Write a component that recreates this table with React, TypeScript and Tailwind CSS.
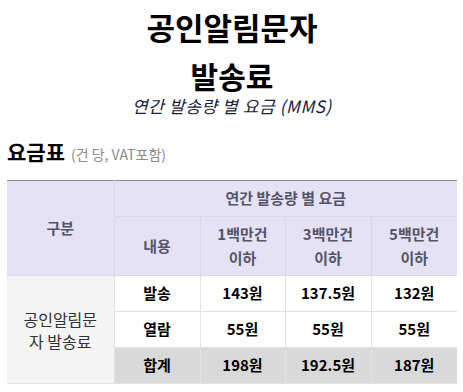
export default function App() {
  const rows = [
    { label: '발송', values: ['143원', '137.5원', '132원'], sum: false },
    { label: '열람', values: ['55원', '55원', '55원'], sum: false },
    { label: '합계', values: ['198원', '192.5원', '187원'], sum: true },
  ]

  return (
    <div
      className="bg-white pl-[7px] pr-[6px] text-black"
      style={{ fontFamily: '"Noto Sans CJK KR", "Noto Sans", sans-serif' }}
    >
      <div className="pt-[5px] text-center">
        <h1 className="text-[31px] font-bold leading-[44px]">공인알림문자</h1>
        <h2 className="mt-[6px] text-[30px] font-bold leading-[40px]">발송료</h2>
        <p className="text-[17px] italic leading-[22px] tracking-[0.6px] text-[#1b1b3a]">
          연간 발송량 별 요금 (MMS)
        </p>
      </div>

      <div className="mt-[20px] flex items-baseline gap-[6px]">
        <span className="text-[21px] font-bold leading-[28px]">요금표</span>
        <span className="text-[14px] text-[#8a8a8a]">(건 당, VAT포함)</span>
      </div>

      <table className="mt-[15px] w-[450px] table-fixed border-collapse border-t border-t-[#8c8c8c] text-[15px]">
        <colgroup>
          <col className="w-[107px]" />
          <col className="w-[86px]" />
          <col className="w-[85px]" />
          <col className="w-[86px]" />
          <col className="w-[86px]" />
        </colgroup>
        <thead className="bg-[#e6e2f6] text-[#555566]">
          <tr className="h-[36px]">
            <th rowSpan={2} className="border-r border-b border-[#d9d5ea] font-semibold">
              구분
            </th>
            <th colSpan={4} className="border-b border-[#d9d5ea] font-semibold">
              연간 발송량 별 요금
            </th>
          </tr>
          <tr className="h-[59px] leading-[24px]">
            <th className="border-r border-b border-[#d9d5ea] font-semibold">내용</th>
            <th className="border-r border-b border-[#d9d5ea] font-semibold">
              1백만건
              <br />
              이하
            </th>
            <th className="border-r border-b border-[#d9d5ea] font-semibold">
              3백만건
              <br />
              이하
            </th>
            <th className="border-b border-[#d9d5ea] font-semibold">
              5백만건
              <br />
              이하
            </th>
          </tr>
        </thead>
        <tbody>
          {rows.map((row, i) => (
            <tr key={row.label} className={`h-[36px] ${row.sum ? 'bg-[#d9d9d9]' : 'bg-white'}`}>
              {i === 0 && (
                <td
                  rowSpan={3}
                  className="border-r border-b border-[#e2e2e2] bg-[#f4f4f4] px-[10px] text-center text-[16px] leading-[22px] text-[#333]"
                >
                  공인알림문자 발송료
                </td>
              )}
              <td className="border-r border-b border-[#e2e2e2] text-center font-bold">{row.label}</td>
              {row.values.map((v, j) => (
                <td
                  key={j}
                  className={`border-b border-[#e2e2e2] text-center font-bold ${j < 2 ? 'border-r' : ''}`}
                >
                  {v}
                </td>
              ))}
            </tr>
          ))}
        </tbody>
      </table>
    </div>
  )
}
